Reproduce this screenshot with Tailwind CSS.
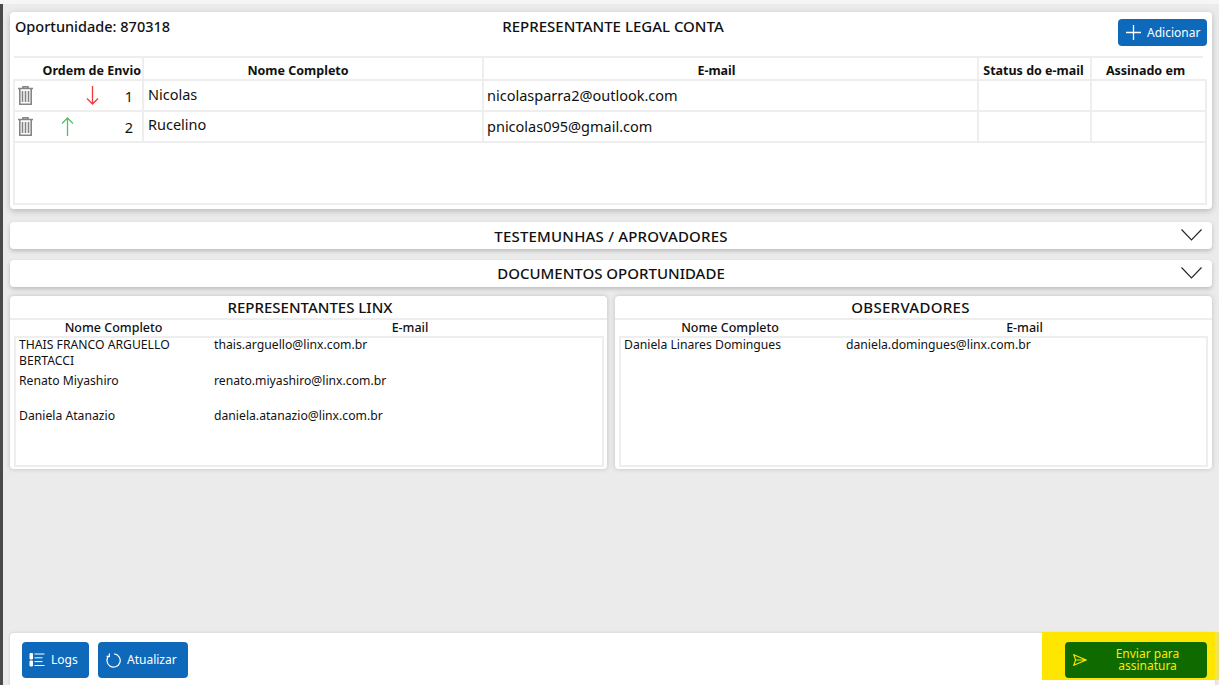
<!DOCTYPE html>
<html lang="en">
<head>
  <meta charset="UTF-8" />
  <title>Oportunidade 870318</title>
  <script src="https://cdn.jsdelivr.net/npm/@tailwindcss/browser@4"></script>
</head>
<body class="w-[1222px] h-[685px] overflow-hidden bg-white font-['Noto_Sans',sans-serif] text-[#111]">
<div class="w-[1219px] h-full bg-[#ebebeb] flex flex-col">
  <div class="h-[4px] bg-[#f6f6f6] shrink-0"></div>
  <div class="flex flex-1 min-h-0">
    <!-- Left edge -->
    <div class="w-[3px] bg-[#4a4a4a] shrink-0"></div>

    <div class="flex-1 flex flex-col pl-[7px] pt-[8px]">
      <div class="w-[1202px]">

        <!-- Representante legal -->
        <section class="h-[197px] bg-white rounded-[4px] shadow-[0_2px_6px_rgba(0,0,0,0.22)] px-[4px] flex flex-col">
          <div class="h-[44px] flex justify-between shrink-0 relative">
            <p class="text-[14.5px] leading-[20px] mt-[4px] ml-px font-medium">Oportunidade: 870318</p>
            <h2 class="absolute left-0 right-[4px] top-[4px] text-center text-[15px] leading-[20px] font-medium pl-[8px]">REPRESENTANTE LEGAL CONTA</h2>
            <button class="w-[89px] h-[27px] mt-[7px] mr-px bg-[#0f69bb] rounded-[4px] text-white text-[12px] flex items-center pl-[8px] gap-[6px]">
              <svg class="w-[15px] h-[15px]" viewBox="0 0 15 15" fill="none" stroke="white" stroke-width="1.3"><path d="M7.5 0v15M0 7.5h15" /></svg>
              Adicionar
            </button>
          </div>

          <!-- Table head -->
          <div class="flex h-[23px] border-t-2 border-[#eee] text-[12.5px] font-bold items-center w-[1189px] shrink-0">
            <div class="w-[128px] h-full text-right pr-px leading-[26px]">Ordem de Envio</div>
            <div class="w-[340px] h-full border-l-2 border-[#eee] text-center pr-[30px] leading-[26px]">Nome Completo</div>
            <div class="w-[495px] h-full border-l-2 border-[#eee] text-center pr-[28px] leading-[26px]">E-mail</div>
            <div class="w-[113px] h-full border-l-2 border-[#eee] text-center pr-[2px] leading-[26px]">Status do e-mail</div>
            <div class="flex-1 h-full border-l-2 border-[#eee] text-center pr-[4px] leading-[26px]">Assinado em</div>
          </div>

          <!-- Table body -->
          <div class="w-[1194px] h-[126px] border-2 border-[#eee] -ml-px text-[14.5px]">
            <div class="flex h-[31px] border-b-2 border-[#eee]">
              <div class="w-[127px] relative flex items-center">
                <svg class="ml-[3px] w-[15px] h-[19px]" viewBox="0 0 15 19" fill="none" stroke="#858585" stroke-width="1.6"><path d="M0 2.5h15M5 2.5V.8h5v1.7M1.8 2.5v15.7h11.4V2.5M4.5 5v11M7.5 5v11M10.5 5v11" /></svg>
                <svg class="ml-[53px] w-[13px] h-[19px]" viewBox="0 0 13 19" fill="none" stroke="#f03a3a" stroke-width="1.3"><path d="M6.5 0v18M1 12.5l5.5 5.5 5.5-5.5" /></svg>
                <span class="absolute right-[9px] top-[5px] leading-[20px]">1</span>
              </div>
              <div class="w-[340px] border-l-2 border-[#eee] pl-[4px] leading-[26px]">Nicolas</div>
              <div class="w-[495px] border-l-2 border-[#eee] pl-[3px] leading-[28px]">nicolasparra2@outlook.com</div>
              <div class="w-[113px] border-l-2 border-[#eee]"></div>
              <div class="flex-1 border-l-2 border-[#eee]"></div>
            </div>
            <div class="flex h-[31px] border-b-2 border-[#eee]">
              <div class="w-[127px] relative flex items-center">
                <svg class="ml-[3px] w-[15px] h-[19px]" viewBox="0 0 15 19" fill="none" stroke="#858585" stroke-width="1.6"><path d="M0 2.5h15M5 2.5V.8h5v1.7M1.8 2.5v15.7h11.4V2.5M4.5 5v11M7.5 5v11M10.5 5v11" /></svg>
                <svg class="ml-[28px] w-[13px] h-[19px]" viewBox="0 0 13 19" fill="none" stroke="#4fc068" stroke-width="1.3"><path d="M6.5 19V1M1 6.5L6.5 1 12 6.5" /></svg>
                <span class="absolute right-[9px] top-[5px] leading-[20px]">2</span>
              </div>
              <div class="w-[340px] border-l-2 border-[#eee] pl-[4px] leading-[24px]">Rucelino</div>
              <div class="w-[495px] border-l-2 border-[#eee] pl-[3px] leading-[28px]">pnicolas095@gmail.com</div>
              <div class="w-[113px] border-l-2 border-[#eee]"></div>
              <div class="flex-1 border-l-2 border-[#eee]"></div>
            </div>
          </div>
        </section>

        <!-- Accordions -->
        <section class="mt-[13px] h-[27px] bg-white rounded-[4px] shadow-[0_2px_4px_rgba(0,0,0,0.2)] relative flex items-center justify-center text-[15px] tracking-[0.2px] font-medium pt-px">
          TESTEMUNHAS / APROVADORES
          <svg class="absolute right-[10px] top-[7px] w-[21px] h-[12px]" viewBox="0 0 21 12" fill="none" stroke="#222" stroke-width="1.1"><path d="M0.5 0.5l10 10.5 10-10.5" /></svg>
        </section>
        <section class="mt-[11px] h-[27px] bg-white rounded-[4px] shadow-[0_2px_4px_rgba(0,0,0,0.2)] relative flex items-center justify-center text-[15px] font-medium">
          DOCUMENTOS OPORTUNIDADE
          <svg class="absolute right-[10px] top-[7px] w-[21px] h-[12px]" viewBox="0 0 21 12" fill="none" stroke="#222" stroke-width="1.1"><path d="M0.5 0.5l10 10.5 10-10.5" /></svg>
        </section>

        <!-- Linx / observers -->
        <div class="mt-[9px] flex gap-[8px]">
          <section class="w-[597px] h-[173px] bg-white rounded-[4px] shadow-[0_0_5px_rgba(0,0,0,0.18)]">
            <h3 class="h-[24px] border-b-2 border-[#eee] text-center text-[15px] leading-[23px] font-medium pl-[3px]">REPRESENTANTES LINX</h3>
            <div class="flex h-[16px] text-[12.5px] leading-[15px] font-medium">
              <div class="w-[207px] text-center">Nome Completo</div>
              <div class="w-[384px] text-center pl-[2px]">E-mail</div>
            </div>
            <div class="mx-[4px] w-[590px] h-[131px] border-2 border-[#eee] text-[12.2px] leading-[16px] pl-[3px]">
              <div class="flex h-[36px] -mt-px pb-px"><div class="w-[195px]">THAIS FRANCO ARGUELLO BERTACCI</div><div>thais.arguello@linx.com.br</div></div>
              <div class="flex h-[35px]"><div class="w-[195px]">Renato Miyashiro</div><div>renato.miyashiro@linx.com.br</div></div>
              <div class="flex"><div class="w-[195px]">Daniela Atanazio</div><div>daniela.atanazio@linx.com.br</div></div>
            </div>
          </section>
          <section class="w-[597px] h-[173px] bg-white rounded-[4px] shadow-[0_0_5px_rgba(0,0,0,0.18)]">
            <h3 class="h-[24px] border-b-2 border-[#eee] text-center text-[15px] tracking-[0.3px] leading-[23px] font-medium pr-[6px]">OBSERVADORES</h3>
            <div class="flex h-[16px] text-[12.5px] leading-[15px] font-medium">
              <div class="w-[230px] text-center">Nome Completo</div>
              <div class="w-[357px] text-center pl-[2px]">E-mail</div>
            </div>
            <div class="mx-[4px] w-[589px] h-[131px] border-2 border-[#eee] text-[12.2px] leading-[16px] pl-[3px]">
              <div class="flex -mt-px"><div class="w-[222px]">Daniela Linares Domingues</div><div>daniela.domingues@linx.com.br</div></div>
            </div>
          </section>
        </div>
      </div>

      <!-- Footer actions -->
      <footer class="mt-auto h-[52px] flex items-start">
        <div class="flex-1 h-full bg-white rounded-tl-[4px] shadow-[0_0_3px_rgba(0,0,0,0.15)] flex items-start pl-[12px]">
          <button class="mt-[9px] w-[67px] h-[36px] bg-[#0f69bb] rounded-[4px] text-white text-[12px] flex items-center pl-[7px] gap-[6px]">
            <svg class="w-[16px] h-[14px]" viewBox="0 0 16 14" fill="none" stroke="white" stroke-width="1"><path d="M5.5 1h10M5.5 4.8h8M5.5 8.6h8M5.5 12.5h10" /><path d="M1 .5h2.5v5.5H1zM1 8h2.5v5H1z" fill="white" /></svg>
            Logs
          </button>
          <button class="ml-[9px] mt-[9px] w-[90px] h-[36px] bg-[#0f69bb] rounded-[4px] text-white text-[12px] flex items-center pl-[8px] gap-[6px]">
            <svg class="w-[15px] h-[15px]" viewBox="0 0 15 15" fill="none" stroke="white" stroke-width="1.2"><path d="M3.2 2.6A6.6 6.6 0 1 0 8.2 .95M3.4 .4v2.9H.6" /></svg>
            Atualizar
          </button>
          <div class="ml-auto -mt-px w-[173px] h-[48px] bg-[#ffe600] flex items-start justify-end pr-[8px] pt-[10px]">
            <button class="w-[142px] h-[36px] bg-[#0f6b00] rounded-[4px] text-[#ffe600] text-[12px] leading-[12px] flex items-center pl-[8px]">
              <svg class="w-[14px] h-[12px] shrink-0" viewBox="0 0 14 12" fill="none" stroke="#ffe600" stroke-width="1.1"><path d="M.8 .8L13 6 .8 11.2 2.6 6zM2.6 6H13" /></svg>
              <span class="flex-1 pl-[10px] pr-[9px] text-center">Enviar para assinatura</span>
            </button>
          </div>
        </div>
        <div class="w-[4px] h-[48px] -mt-px bg-[#f3e35a]"></div>
      </footer>
    </div>
  </div>
</div>
</body>
</html>
